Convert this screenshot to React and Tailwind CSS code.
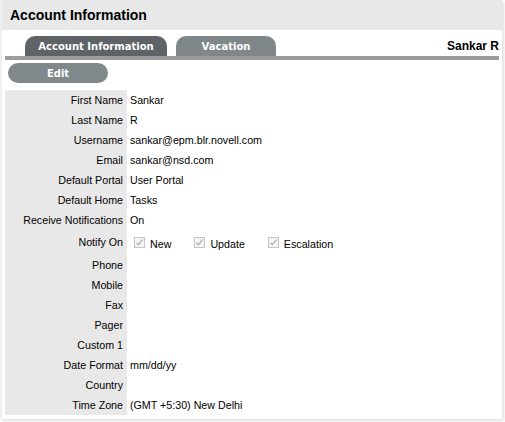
import React from "react";

const rows = [
  ["First Name", "Sankar"],
  ["Last Name", "R"],
  ["Username", "sankar@epm.blr.novell.com"],
  ["Email", "sankar@nsd.com"],
  ["Default Portal", "User Portal"],
  ["Default Home", "Tasks"],
  ["Receive Notifications", "On"],
  ["Notify On", null],
  ["Phone", ""],
  ["Mobile", ""],
  ["Fax", ""],
  ["Pager", ""],
  ["Custom 1", ""],
  ["Date Format", "mm/dd/yy"],
  ["Country", ""],
  ["Time Zone", "(GMT +5:30) New Delhi"],
];

function Check({ label }) {
  return (
    <div className="flex items-center mr-[19px]">
      <span className="ml-[4px] mr-[5px] w-[11px] h-[11px] border border-[#c4c4c4] bg-[#f5f5f5] flex items-center justify-center">
        <svg width="9" height="9" viewBox="0 0 9 9">
          <path d="M1.5 4.8 L3.4 6.8 L7.5 1.5" fill="none" stroke="#b4b4b4" strokeWidth="1.3" />
        </svg>
      </span>
      <span className="pt-[3px]">{label}</span>
    </div>
  );
}

export default function App() {
  return (
    <div className="w-[505px] h-[422px] bg-white font-['Liberation_Sans',Arial,sans-serif] text-black">
      <div className="w-[502px] h-[419px] bg-white border-l-2 border-[#efefef] shadow-[2px_2px_3px_rgba(0,0,0,0.12)]">
        {/* Header */}
        <div className="h-[30px] bg-[#e8e8e8] pl-[8px] flex items-center text-[14px] font-bold">
          Account Information
        </div>

        <div className="pl-[3px] pr-[3px]">
          {/* Tabs */}
          <div className="flex items-end h-[26px] pl-[20px]">
            <div className="w-[142px] h-[20px] rounded-t-[10px] bg-[#5e6367] text-white text-[10px] font-bold font-['DejaVu_Sans',Verdana,sans-serif] flex items-center justify-center">
              Account Information
            </div>
            <div className="ml-[9px] w-[100px] h-[20px] rounded-t-[10px] bg-[#80878b] text-white text-[10px] font-bold font-['DejaVu_Sans',Verdana,sans-serif] flex items-center justify-center">
              Vacation
            </div>
            <div className="ml-auto self-center mt-[6px] text-[12px] font-bold">Sankar R</div>
          </div>
          <div className="h-[4px] bg-[#9c9c9c]" />

          {/* Edit */}
          <div className="flex pt-[3px] pb-[7px]">
            <button className="block ml-[3px] w-[100px] h-[20px] rounded-full bg-[#80888c] text-white text-[10px] font-bold font-['DejaVu_Sans',Verdana,sans-serif]">
              Edit
            </button>
          </div>

          {/* Details */}
          <div className="grid grid-cols-[122px_1fr] text-[10.7px]">
            {rows.map(([label, value]) => (
              <React.Fragment key={label}>
                <div
                  className={`bg-[#e8e8e8] text-right pr-[4px] flex items-center justify-end ${
                    value === null ? "h-[25px]" : "h-[20px]"
                  }`}
                >
                  {label}
                </div>
                <div className={`pl-[3px] flex items-center ${value === null ? "h-[25px]" : "h-[20px]"}`}>
                  {value === null ? (
                    <div className="flex items-center">
                      <Check label="New" />
                      <Check label="Update" />
                      <Check label="Escalation" />
                    </div>
                  ) : (
                    value
                  )}
                </div>
              </React.Fragment>
            ))}
          </div>
        </div>
      </div>
    </div>
  );
}
